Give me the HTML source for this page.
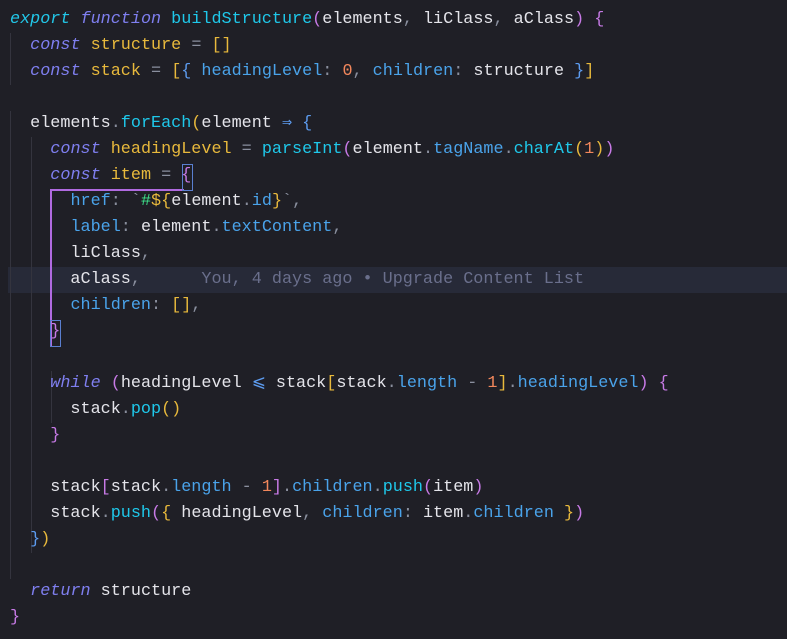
<!DOCTYPE html>
<html><head><meta charset="utf-8"><style>
html,body{margin:0;padding:0;background:#1f1f26;width:787px;height:639px;overflow:hidden}
pre{position:absolute;left:10px;top:7px;margin:0;font-family:"Liberation Mono",monospace;font-size:16.8px;line-height:26px;color:#e4e4ea}
.hl{position:absolute;left:8px;right:0;top:267px;height:26px;background:#272a38}
.g{position:absolute;width:1px;background:#34343e}
.k{color:#7f7ff0;font-style:italic}.e{color:#22c7e8;font-style:italic}
.f{color:#1fc8ea}.v{color:#e8b93c}.p{color:#4aa3ea}.n{color:#f2875c}.c{color:#8a8f9e}
.b1{color:#c77ae6}.b2{color:#e8b93c}.b3{color:#5d9cf0}.s{color:#3ee08a}.m{color:#6a6f8c}
.box{position:absolute;border:1px solid #b06ae0}
</style></head><body>
<div class="hl"></div>
<div class="g" style="left:10px;top:33px;height:52px"></div>
<div class="g" style="left:10px;top:111px;height:468px"></div>
<div class="g" style="left:31px;top:137px;height:416px"></div>
<div class="g" style="left:51px;top:371px;height:52px"></div>
<div class="box" style="left:50px;top:189px;width:0;height:155px"></div>
<div class="box" style="left:50px;top:189px;width:132px;height:0"></div>
<div class="box" style="left:182px;top:164px;width:9px;height:25px;border-color:#5a7fd0"></div>
<div class="box" style="left:50px;top:320px;width:9px;height:25px;border-color:#5a7fd0"></div>
<pre><span class="e">export</span> <span class="k">function</span> <span class="f">buildStructure</span><span class="b1">(</span>elements<span class="c">,</span> liClass<span class="c">,</span> aClass<span class="b1">)</span> <span class="b1">{</span>
  <span class="k">const</span> <span class="v">structure</span> <span class="c">=</span> <span class="b2">[]</span>
  <span class="k">const</span> <span class="v">stack</span> <span class="c">=</span> <span class="b2">[</span><span class="b3">{</span> <span class="p">headingLevel</span><span class="c">:</span> <span class="n">0</span><span class="c">,</span> <span class="p">children</span><span class="c">:</span> structure <span class="b3">}</span><span class="b2">]</span>

  elements<span class="c">.</span><span class="f">forEach</span><span class="b2">(</span>element <span class="b3">⇒</span> <span class="b3">{</span>
    <span class="k">const</span> <span class="v">headingLevel</span> <span class="c">=</span> <span class="f">parseInt</span><span class="b1">(</span>element<span class="c">.</span><span class="p">tagName</span><span class="c">.</span><span class="f">charAt</span><span class="b2">(</span><span class="n">1</span><span class="b2">)</span><span class="b1">)</span>
    <span class="k">const</span> <span class="v">item</span> <span class="c">=</span> <span class="b1">{</span>
      <span class="p">href</span><span class="c">:</span> <span class="c">`</span><span class="s">#</span><span class="b2">${</span>element<span class="c">.</span><span class="p">id</span><span class="b2">}</span><span class="c">`,</span>
      <span class="p">label</span><span class="c">:</span> element<span class="c">.</span><span class="p">textContent</span><span class="c">,</span>
      liClass<span class="c">,</span>
      aClass<span class="c">,</span>      <span class="m">You, 4 days ago • Upgrade Content List</span>
      <span class="p">children</span><span class="c">:</span> <span class="b2">[]</span><span class="c">,</span>
    <span class="b1">}</span>

    <span class="k">while</span> <span class="b1">(</span>headingLevel <span class="b3">⩽</span> stack<span class="b2">[</span>stack<span class="c">.</span><span class="p">length</span> <span class="c">-</span> <span class="n">1</span><span class="b2">]</span><span class="c">.</span><span class="p">headingLevel</span><span class="b1">)</span> <span class="b1">{</span>
      stack<span class="c">.</span><span class="f">pop</span><span class="b2">()</span>
    <span class="b1">}</span>

    stack<span class="b1">[</span>stack<span class="c">.</span><span class="p">length</span> <span class="c">-</span> <span class="n">1</span><span class="b1">]</span><span class="c">.</span><span class="p">children</span><span class="c">.</span><span class="f">push</span><span class="b1">(</span>item<span class="b1">)</span>
    stack<span class="c">.</span><span class="f">push</span><span class="b1">(</span><span class="b2">{</span> headingLevel<span class="c">,</span> <span class="p">children</span><span class="c">:</span> item<span class="c">.</span><span class="p">children</span> <span class="b2">}</span><span class="b1">)</span>
  <span class="b3">}</span><span class="b2">)</span>

  <span class="k">return</span> structure
<span class="b1">}</span></pre>
</body></html>
